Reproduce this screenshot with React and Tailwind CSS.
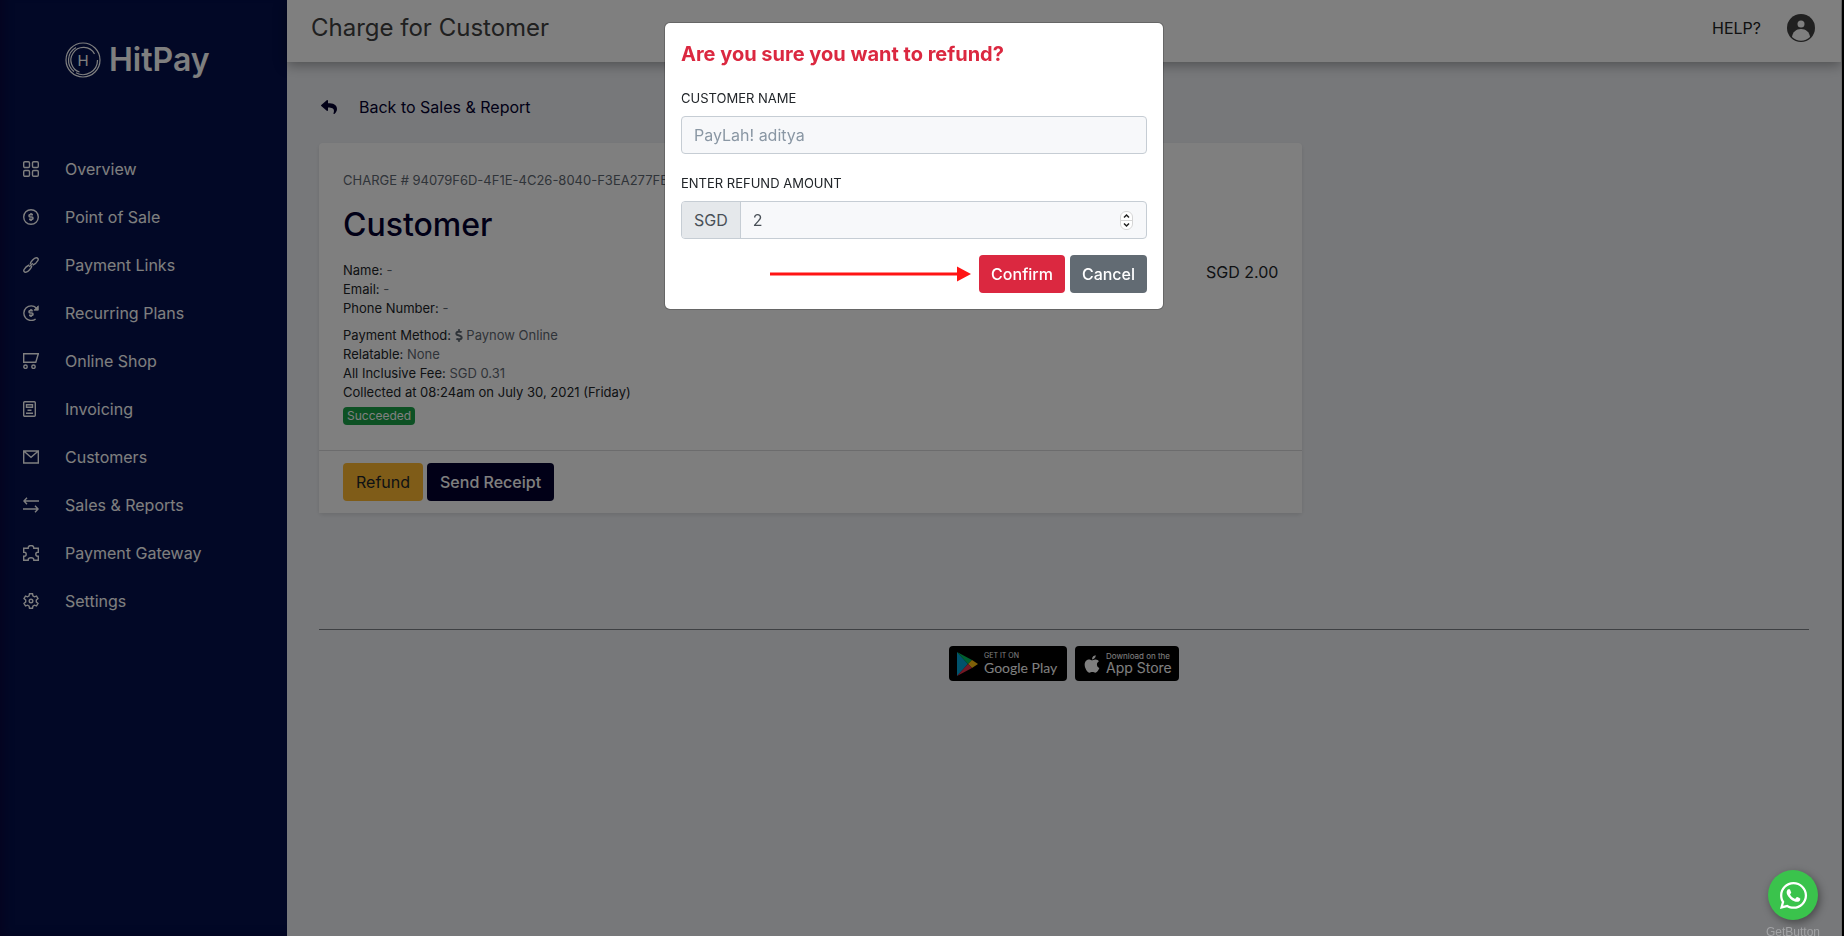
import { useState } from "react";
import { FaApple, FaDollarSign, FaReply, FaWhatsapp } from "react-icons/fa";

const navItems = [
  {
    label: "Overview",
    icon: (
      <>
        <rect x="0.7" y="0.7" width="5.8" height="5.8" rx="1.2" />
        <rect x="9.5" y="0.7" width="5.8" height="5.8" rx="1.2" />
        <rect x="0.7" y="9.5" width="5.8" height="5.8" rx="1.2" />
        <rect x="9.5" y="9.5" width="5.8" height="5.8" rx="1.2" />
      </>
    ),
  },
  {
    label: "Point of Sale",
    icon: (
      <>
        <circle cx="8" cy="8" r="7.3" />
        <path d="M10 5.6H7.2a1.2 1.2 0 0 0 0 2.4h1.6a1.2 1.2 0 0 1 0 2.4H6M8 4v1.6M8 10.4V12" strokeWidth="1.6" />
      </>
    ),
  },
  {
    label: "Payment Links",
    icon: (
      <>
        <path d="M7.2 7.4C7 5.5 11.2.7 13.2.7c1.7 0 2.5 1.3 1.7 2.8-.9 1.7-3.2 3.8-5 4.5" />
        <path d="M8.8 8.6c.2 1.9-4 6.7-6 6.7-1.7 0-2.5-1.3-1.7-2.8.9-1.7 3.2-3.8 5-4.5" />
        <path d="M6.2 9.8l3.6-3.6" />
      </>
    ),
  },
  {
    label: "Recurring Plans",
    icon: (
      <>
        <path d="M12.6 14A7.3 7.3 0 1 1 13.3 3" />
        <path d="M15.3.8v4.4h-4.4z" fill="currentColor" strokeWidth="0.8" />
        <path d="M9.8 5.6H7.2a1.2 1.2 0 0 0 0 2.4h1.6a1.2 1.2 0 0 1 0 2.4H6M8 4v1.6M8 10.4V12" strokeWidth="1.6" />
      </>
    ),
  },
  {
    label: "Online Shop",
    icon: (
      <>
        <path d="M16 .7H.7v8.6h12.1L15.3.7" />
        <circle cx="2.5" cy="13.7" r="1.7" />
        <circle cx="10.5" cy="13.7" r="1.7" />
      </>
    ),
  },
  {
    label: "Invoicing",
    icon: (
      <>
        <rect x="0.7" y="0.7" width="11.6" height="14.6" rx="1" />
        <path d="M3.5 3.7h6v2.6h-6zM4.5 9.3h4M3 12.3h7" />
      </>
    ),
  },
  {
    label: "Customers",
    icon: <path d="M.7 2h14.6v12H.7zM1 2.3l7 6 7-6" />,
  },
  {
    label: "Sales & Reports",
    icon: <path d="M16 4H1M4 .8L.9 4 4 7.2M0 12h15M12 8.8l3.1 3.2-3.1 3.2" />,
  },
  {
    label: "Payment Gateway",
    icon: (
      <path d="M.7 3.3h4.5V2.8a2.8 2.3 0 0 1 5.6 0v.5h4.5v4h-.6a1.9 2 0 0 0 0 4h.6v4h-4.5v-.6c0-2.6-5.6-2.6-5.6 0v.6H.7v-4h.6a1.9 2 0 0 0 0-4H.7z" />
    ),
  },
  {
    label: "Settings",
    icon: (
      <>
        <path d="M6.5.7h3l.4 2.2 1.5.9 2.1-.8 1.5 2.6-1.7 1.4v2l1.7 1.4-1.5 2.6-2.1-.8-1.5.9-.4 2.2h-3l-.4-2.2-1.5-.9-2.1.8L1 10.4 2.7 9V7L1 5.6 2.5 3l2.1.8 1.5-.9z" />
        <circle cx="8" cy="8" r="1.8" />
      </>
    ),
  },
];

function Logo() {
  return (
    <a href="#" className="flex items-center gap-2 pl-[65px] text-white">
      <svg width="36" height="36" viewBox="0 0 36 36" fill="none" stroke="currentColor" strokeWidth="1.2">
        <circle cx="18" cy="18" r="17" />
        <path d="M9 29.5A14.5 14.5 0 0 1 11 5.5" />
        <path d="M32.5 18A14.5 14.5 0 0 1 11 30.8" />
        <path d="M29.5 12A12.5 12.5 0 0 0 8 11.2 12.5 12.5 0 0 0 14.5 30" />
        <text x="18" y="23.5" textAnchor="middle" fontSize="15" fontFamily="Inter, sans-serif" fill="currentColor" stroke="none">H</text>
      </svg>
      <span className="text-[32px] leading-9 font-semibold">HitPay</span>
    </a>
  );
}

function Sidebar() {
  return (
    <aside className="w-[287px] shrink-0 bg-[#04104c] pt-[42px] shadow-[inset_8px_-4px_10px_-4px_#0a0840]">
      <Logo />
      <nav className="mt-[67px]">
        {navItems.map((item) => (
          <a key={item.label} href="#" className="flex h-12 items-center gap-[26px] pl-[23px] text-white">
            <svg width="16" height="16" viewBox="0 0 16 16" fill="none" stroke="currentColor" strokeWidth="1.4">
              {item.icon}
            </svg>
            {item.label}
          </a>
        ))}
      </nav>
    </aside>
  );
}

function Header() {
  return (
    <header className="flex h-[62px] items-center justify-between bg-white pr-[26px] pb-1.5 pl-6 text-[#404040] shadow-[0_3px_12px_rgba(0,0,0,0.35)]">
      <h1 className="text-2xl">Charge for Customer</h1>
      <div className="flex items-center gap-[26px]">
        <a href="#" className="text-[#222]">HELP?</a>
        <button type="button" aria-label="Account">
          <svg width="28" height="28" viewBox="0 0 28 28" className="block">
            <circle cx="14" cy="14" r="14" fill="#404040" />
            <circle cx="14" cy="10" r="3.5" fill="#fff" />
            <path d="M5 23c.6-5 4-8 9-8s8.4 3 9 8c-2.4 2.4-5.6 3.7-9 3.7S7.4 25.4 5 23z" fill="#fff" />
          </svg>
        </button>
      </div>
    </header>
  );
}

function ChargeCard() {
  return (
    <section className="w-[66%] rounded bg-white shadow-[0_2px_4px_rgba(0,0,0,0.1)]">
      <div className="flex justify-between px-6 pt-[27px] pb-[25px]">
        <div>
          <p className="text-[13px] leading-5 text-[#5f6872]">CHARGE # 94079F6D-4F1E-4C26-8040-F3EA277FE</p>
          <h2 className="mt-[15px] text-[32px] leading-10 font-medium text-[#03002e]">Customer</h2>
          <div className="mt-4 text-[13px] leading-[19px] text-[#212529]">
            <p>Name: <span className="text-[#5f6872]">-</span></p>
            <p>Email: <span className="text-[#5f6872]">-</span></p>
            <p>Phone Number: <span className="text-[#5f6872]">-</span></p>
            <p className="mt-2">
              Payment Method: <FaDollarSign className="inline w-2 align-[-2px] text-[#5f6872]" size={13} viewBox="60 0 168 512" />{" "}
              <span className="text-[#5f6872]">Paynow Online</span>
            </p>
            <p>Relatable: <span className="text-[#5f6872]">None</span></p>
            <p>All Inclusive Fee: <span className="text-[#5f6872]">SGD 0.31</span></p>
            <p>Collected at 08:24am on July 30, 2021 (Friday)</p>
          </div>
          <span className="mt-[5px] block w-fit rounded bg-[#1aa349] px-1 text-xs leading-[18px] text-white">Succeeded</span>
        </div>
        <p className="mt-[90px] text-[#212529]">SGD 2.00</p>
      </div>
      <div className="flex gap-1 border-t border-[#d8d9da] bg-[#fcfcfc] px-6 py-3">
        <button type="button" className="h-[38px] rounded bg-[#ffb930] px-[13px] text-[#212529]">Refund</button>
        <button type="button" className="h-[38px] rounded bg-[#03002e] px-[13px] font-medium text-white">Send Receipt</button>
      </div>
    </section>
  );
}

function StoreBadges() {
  return (
    <div className="mt-4 flex justify-center gap-2">
      <a href="#" className="flex h-[35px] w-[118px] items-center gap-1.5 rounded bg-black pl-2 text-white">
        <svg width="21" height="24" viewBox="0 0 21 24" className="shrink-0">
          <path d="M0 0l11 12L0 24z" fill="#00a5d8" />
          <path d="M0 0l15 8-4 4z" fill="#00c060" />
          <path d="M15 8l6 4-6 4-4-4z" fill="#ffc010" />
          <path d="M0 24l11-12 4 4z" fill="#e8304a" />
        </svg>
        <span>
          <span className="block text-[7px] leading-2">GET IT ON</span>
          <span className="block font-[Lato,sans-serif] text-sm leading-4 whitespace-nowrap">Google Play</span>
        </span>
      </a>
      <a href="#" className="flex h-[35px] w-[104px] items-center gap-1 rounded bg-black pl-[7px] text-white">
        <FaApple size={20} className="shrink-0" />
        <span>
          <span className="block text-[8px] leading-2 whitespace-nowrap">Download on the</span>
          <span className="block text-sm leading-4 whitespace-nowrap">App Store</span>
        </span>
      </a>
    </div>
  );
}

function RefundModal({ onClose }) {
  const [amount, setAmount] = useState("2");

  const step = (delta) => setAmount(String(Math.max(0, Number(amount) + delta)));

  return (
    <div className="fixed inset-0 flex items-start justify-center bg-black/50 pt-[22px] pr-4">
      <form
        role="dialog"
        aria-labelledby="refund-title"
        onSubmit={(e) => e.preventDefault()}
        className="w-full max-w-[500px] rounded-md border border-black/20 bg-white bg-clip-padding px-4 pt-[15px] pb-4"
      >
        <h2 id="refund-title" className="text-xl leading-8 font-bold text-[#db2840]">Are you sure you want to refund?</h2>

        <label htmlFor="customer" className="mt-[18px] block text-[13px] leading-5 text-[#212529]">CUSTOMER NAME</label>
        <input id="customer" type="text" readOnly value="PayLah! aditya" className="mt-2 block h-[38px] w-full rounded border border-[#c6cdd4] bg-[#f7f8fa] px-3 text-[#8a97a4] outline-none" />

        <label htmlFor="amount" className="mt-[19px] block text-[13px] leading-5 text-[#212529]">ENTER REFUND AMOUNT</label>
        <div className="mt-2 flex h-[38px] items-stretch overflow-hidden rounded border border-[#c6cdd4] bg-[#f7f8fa] text-[#495057]">
          <span className="flex items-center border-r border-[#c6cdd4] bg-[#e5e8eb] px-3">SGD</span>
          <input id="amount" type="text" inputMode="numeric" value={amount} onChange={(e) => setAmount(e.target.value)} className="min-w-0 flex-1 px-3 outline-none" />
          <span className="mr-[13px] flex flex-col self-center rounded-md border border-[#d5d5d5] bg-white text-[#222]">
            <button type="button" aria-label="Increase" onClick={() => step(1)} className="border-b border-[#d5d5d5]">
              <svg width="11" height="8" viewBox="0 0 11 8" fill="none" stroke="currentColor" strokeWidth="1.5" className="block"><path d="M3 5.5L5.5 3 8 5.5" /></svg>
            </button>
            <button type="button" aria-label="Decrease" onClick={() => step(-1)}>
              <svg width="11" height="8" viewBox="0 0 11 8" fill="none" stroke="currentColor" strokeWidth="1.5" className="block"><path d="M3 2.5L5.5 5 8 2.5" /></svg>
            </button>
          </span>
        </div>

        <div className="mt-4 flex items-center justify-end">
          <svg width="201" height="16" viewBox="0 0 201 16" fill="#ff1414" className="mr-2">
            <path d="M0 6.5h187V.5L201 8l-14 7.5v-6H0z" />
          </svg>
          <button type="submit" className="h-[38px] rounded bg-[#db2840] px-3 font-medium text-white">Confirm</button>
          <button type="button" onClick={onClose} className="ml-[5px] h-[38px] rounded bg-[#626b73] px-3 font-medium text-white">Cancel</button>
        </div>
      </form>
    </div>
  );
}

function App() {
  const [open, setOpen] = useState(true);

  return (
    <div className="flex min-h-screen border-r-2 border-black bg-[#eff1f5] font-[Inter,sans-serif] text-base">
      <Sidebar />
      <div className="min-w-0 flex-1 border-r border-[#d8d8d8]">
        <Header />
        <main className="px-8 pt-[33px]">
          <a href="#" className="flex items-center gap-[22px] pl-0.5 text-[#03002e]">
            <FaReply size={16} />
            Back to Sales &amp; Report
          </a>
          <div className="mt-6">
            <ChargeCard />
          </div>
          <hr className="mt-[116px] border-[#7d8187]" />
          <StoreBadges />
        </main>
      </div>

      {open && <RefundModal onClose={() => setOpen(false)} />}

      <div className="fixed right-[26px] -bottom-1 flex w-[50px] flex-col items-center">
        <a href="#" aria-label="WhatsApp" className="flex h-[50px] w-[50px] items-center justify-center rounded-full bg-[#3ac34c] text-white shadow-[2px_3px_8px_rgba(0,0,0,0.4)]">
          <FaWhatsapp size={31} />
        </a>
        <a href="#" className="mt-1 font-[Liberation_Sans,sans-serif] text-xs leading-4 text-[#a2a3a5]">GetButton</a>
      </div>
    </div>
  );
}

export default App;
